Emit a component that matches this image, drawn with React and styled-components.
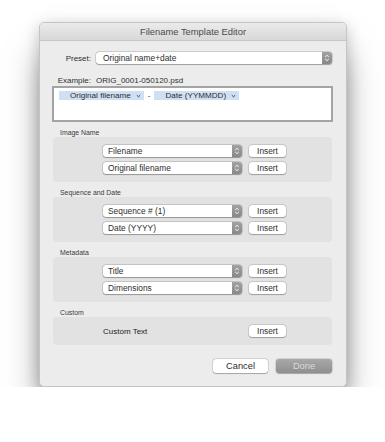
import React from 'react';
import styled, { createGlobalStyle } from 'styled-components';

const GlobalStyle = createGlobalStyle`
  html, body {
    margin: 0;
    padding: 0;
    background: #fff;
  }
  body {
    font-family: "Liberation Sans", Arial, sans-serif;
    color: #333;
  }
`;

const Page = styled.div`
  padding: 22px 0 0 39px;
`;

const Window = styled.div`
  width: 308px;
  box-sizing: border-box;
  background: #ececec;
  border: 1px solid #c4c4c4;
  border-radius: 5px;
  box-shadow: 0 26px 34px -6px rgba(0, 0, 0, 0.5), 0 3px 16px rgba(0, 0, 0, 0.2);
  overflow: hidden;
`;

const TitleBar = styled.div`
  height: 17px;
  background: linear-gradient(#ebebeb, #d8d8d8);
  border-bottom: 1px solid #c6c6c6;
  display: flex;
  align-items: center;
  justify-content: center;
  font-size: 9.4px;
  color: #4a4a4a;
`;

const Content = styled.div`
  padding: 11px 14px 13px 13px;
  display: flex;
  flex-direction: column;
`;

const FieldRow = styled.div`
  display: flex;
  align-items: center;
  gap: 5px;
  height: 12px;
  margin-top: ${p => p.$top || 0}px;
  font-size: 8px;
  color: #2e2e2e;
`;

const FieldLabel = styled.span`
  width: 38px;
  text-align: right;
  flex-shrink: 0;
`;

const Select = styled.div`
  display: flex;
  flex: ${p => (p.$grow ? 1 : '0 0 auto')};
  width: ${p => (p.$grow ? 'auto' : '139px')};
  height: 12px;
  background: #fff;
  border-radius: 3px;
  box-shadow: 0 0 0 0.5px rgba(0, 0, 0, 0.22), 0 0.5px 1px rgba(0, 0, 0, 0.25);
  overflow: hidden;
  font-size: 8.4px;
  line-height: 12px;
  color: #2e2e2e;
`;

const SelectText = styled.span`
  flex: 1;
  padding-left: ${p => p.$pad || 5}px;
  white-space: nowrap;
`;

const Stepper = styled.span`
  width: 10px;
  background: linear-gradient(#a2a2a2, #888);
  display: flex;
  align-items: center;
  justify-content: center;
`;

const TokenField = styled.div`
  margin: 0 -1px;
  height: 36px;
  box-sizing: border-box;
  background: #fff;
  border: 2px solid #a4a4a4;
  padding: 3px 5px;
  display: flex;
  align-items: flex-start;
  gap: 4px;
  font-size: 8.1px;
  color: #2e2e2e;
`;

const Token = styled.span`
  display: inline-flex;
  align-items: center;
  gap: 5px;
  height: 9px;
  line-height: 9px;
  padding: 0 3px 0 11px;
  background: #cfe0f4;
  white-space: nowrap;
`;

const Dash = styled.span`
  line-height: 9px;
`;

const SectionLabel = styled.div`
  margin-top: 6px;
  height: 9px;
  line-height: 9px;
  padding-left: 7px;
  font-size: 6.9px;
  color: #3a3a3a;
`;

const SectionBox = styled.div`
  background: #e2e2e2;
  border-radius: 4px;
  padding: 8px 0;
  display: flex;
  flex-direction: column;
  align-items: center;
  gap: 5px;
`;

const Row = styled.div`
  display: flex;
  align-items: center;
  gap: 7px;
  margin-left: 4px;
`;

const Button = styled.div`
  width: ${p => p.$width || 37}px;
  height: ${p => p.$height || 12}px;
  box-sizing: border-box;
  display: flex;
  align-items: center;
  justify-content: center;
  border-radius: 3px;
  font-size: ${p => p.$size || 8.3}px;
  background: ${p => (p.$disabled ? 'linear-gradient(#a8a8a8, #8f8f8f)' : '#fff')};
  color: ${p => (p.$disabled ? '#d9d9d9' : '#2e2e2e')};
  box-shadow: 0 0 0 0.5px rgba(0, 0, 0, 0.2), 0 0.5px 1px rgba(0, 0, 0, 0.22);
`;

const CustomLabel = styled.span`
  width: 139px;
  font-size: 8px;
  color: #222;
`;

const Footer = styled.div`
  margin-top: 14px;
  display: flex;
  justify-content: flex-end;
  gap: 8px;
`;

const StepperIcon = () => (
  <svg width="6" height="8" viewBox="0 0 6 8">
    <path d="M1.2 3 L3 1.3 L4.8 3 M1.2 5 L3 6.7 L4.8 5" fill="none" stroke="#fff" strokeWidth="0.9" />
  </svg>
);

const Chevron = () => (
  <svg width="5" height="4" viewBox="0 0 5 4">
    <path d="M0.8 1.2 L2.5 2.8 L4.2 1.2" fill="none" stroke="#333" strokeWidth="0.9" />
  </svg>
);

const PopUp = ({ value }) => (
  <Select>
    <SelectText>{value}</SelectText>
    <Stepper>
      <StepperIcon />
    </Stepper>
  </Select>
);

const sections = [
  { title: 'Image Name', items: ['Filename', 'Original filename'] },
  { title: 'Sequence and Date', items: ['Sequence # (1)', 'Date (YYYY)'] },
  { title: 'Metadata', items: ['Title', 'Dimensions'] },
];

const App = () => {
  return (
    <Page>
      <GlobalStyle />
      <Window>
        <TitleBar>Filename Template Editor</TitleBar>
        <Content>
          <FieldRow>
            <FieldLabel>Preset:</FieldLabel>
            <Select $grow>
              <SelectText $pad={7}>Original name+date</SelectText>
              <Stepper>
                <StepperIcon />
              </Stepper>
            </Select>
          </FieldRow>
          <FieldRow $top={10}>
            <FieldLabel>Example:</FieldLabel>
            <span>ORIG_0001-050120.psd</span>
          </FieldRow>
          <TokenField>
            <Token>
              Original filename
              <Chevron />
            </Token>
            <Dash>-</Dash>
            <Token>
              Date (YYMMDD)
              <Chevron />
            </Token>
          </TokenField>

          {sections.map(section => (
            <React.Fragment key={section.title}>
              <SectionLabel>{section.title}</SectionLabel>
              <SectionBox>
                {section.items.map(item => (
                  <Row key={item}>
                    <PopUp value={item} />
                    <Button>Insert</Button>
                  </Row>
                ))}
              </SectionBox>
            </React.Fragment>
          ))}

          <SectionLabel>Custom</SectionLabel>
          <SectionBox>
            <Row>
              <CustomLabel>Custom Text</CustomLabel>
              <Button>Insert</Button>
            </Row>
          </SectionBox>

          <Footer>
            <Button $width={55} $height={14} $size={9.3}>Cancel</Button>
            <Button $width={56} $height={14} $size={9.3} $disabled>Done</Button>
          </Footer>
        </Content>
      </Window>
    </Page>
  );
};

export default App;
